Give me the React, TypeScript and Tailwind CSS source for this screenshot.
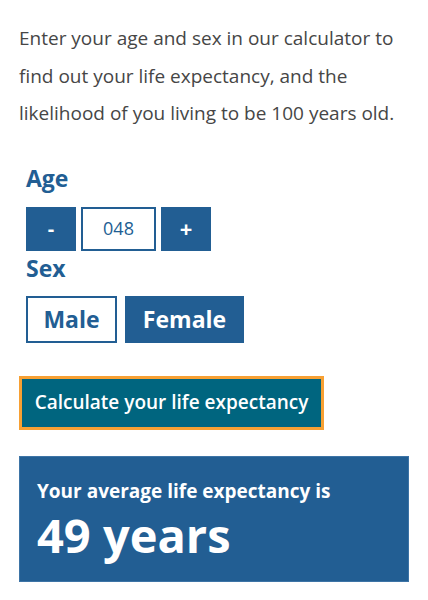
import { useState } from 'react'

export default function App() {
  const [age, setAge] = useState(48)
  const [sex, setSex] = useState<'male' | 'female'>('female')

  const pad = (n: number) => String(n).padStart(3, '0')

  return (
    <main className="bg-white px-[19px] pt-[20px] pb-6 font-['Open_Sans',sans-serif]">
      <p className="text-[19px] leading-[37.5px] text-[#464646]">
        Enter your age and sex in our calculator to find out your life expectancy, and the likelihood of you living to be 100 years old.
      </p>

      <div className="ml-[7px] mt-[30px]">
        <h2 className="text-[23px] font-bold leading-[30px] text-[#225e93]">Age</h2>
        <div className="mt-[14px] flex gap-[5px]">
          <button
            onClick={() => setAge(a => Math.max(0, a - 1))}
            className="h-[44px] w-[50px] bg-[#225e93] text-[20px] font-bold text-white"
          >
            -
          </button>
          <div className="flex h-[44px] w-[75px] items-center justify-center border-2 border-[#225e93] text-[18px] text-[#225e93]">
            {pad(age)}
          </div>
          <button
            onClick={() => setAge(a => a + 1)}
            className="h-[44px] w-[50px] bg-[#225e93] text-[22px] font-bold text-white"
          >
            +
          </button>
        </div>

        <h2 className="mt-[2px] text-[23px] font-bold leading-[30px] text-[#225e93]">Sex</h2>
        <div className="mt-[13px] flex gap-[8px]">
          <button
            onClick={() => setSex('male')}
            className={`h-[47px] w-[91px] border-2 border-[#225e93] text-[23px] font-bold ${sex === 'male' ? 'bg-[#225e93] text-white' : 'bg-white text-[#225e93]'}`}
          >
            Male
          </button>
          <button
            onClick={() => setSex('female')}
            className={`h-[47px] w-[119px] border-2 border-[#225e93] text-[23px] font-bold ${sex === 'female' ? 'bg-[#225e93] text-white' : 'bg-white text-[#225e93]'}`}
          >
            Female
          </button>
        </div>
      </div>

      <button className="mt-[33px] h-[54px] w-[305px] border-[3px] border-[#f7a033] bg-[#00657f] text-[19px] font-semibold text-white">
        Calculate your life expectancy
      </button>

      {/* Result */}
      <div className="mt-[26px] h-[126px] border border-[#3d74a6] bg-[#225e93] px-[17px] pt-[20px] text-white">
        <p className="text-[19px] font-bold leading-[28px]">Your average life expectancy is</p>
        <p className="text-[47px] font-bold leading-[60px]">{sex === 'female' ? 49 : 45} years</p>
      </div>
    </main>
  )
}
